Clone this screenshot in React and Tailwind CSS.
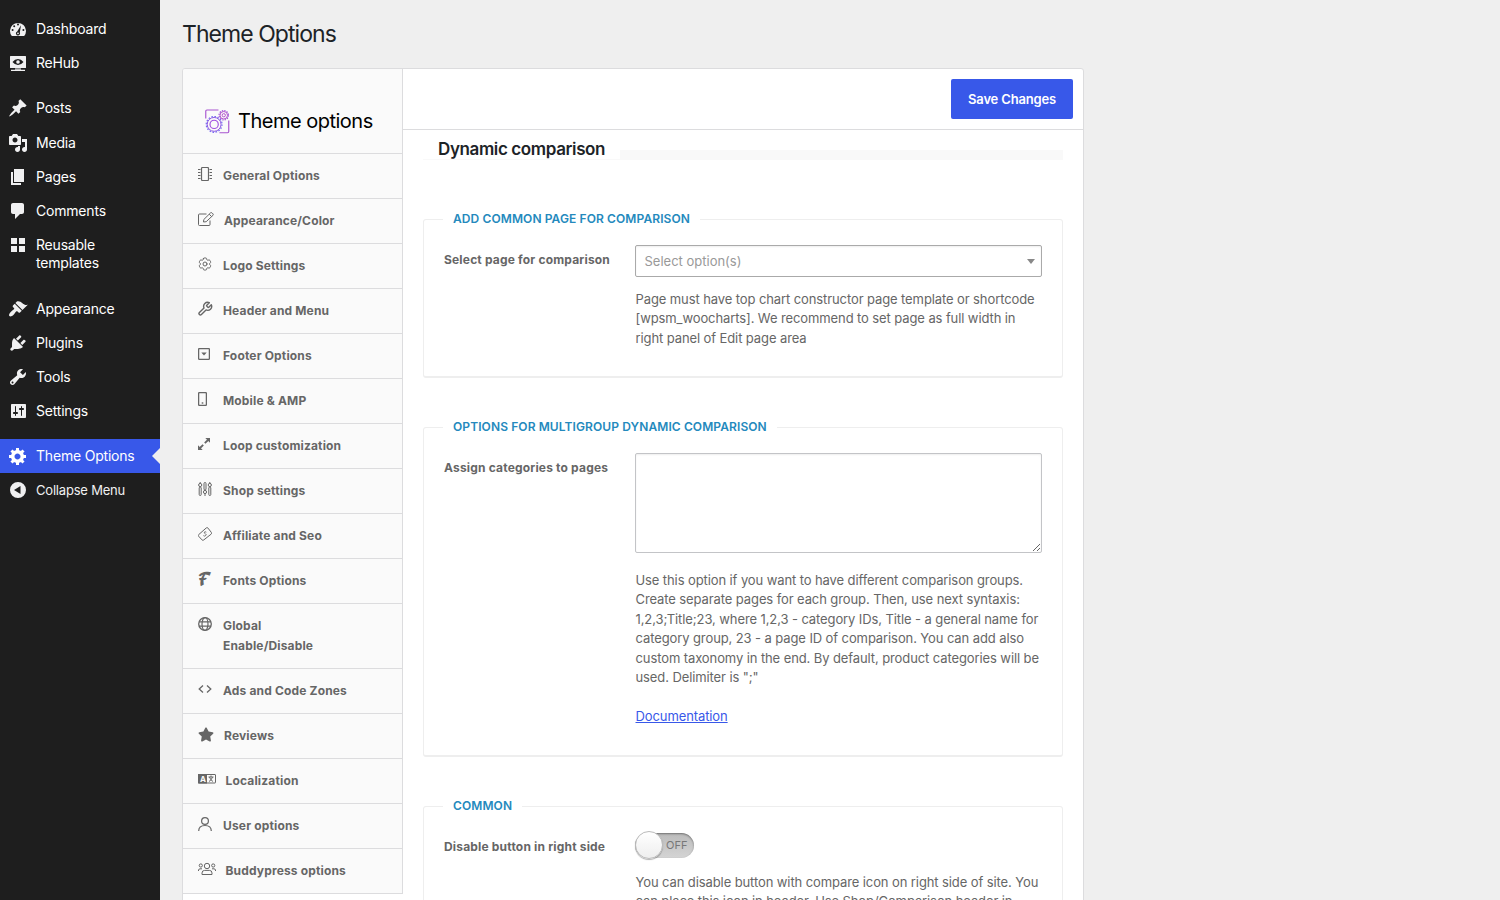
import clsx from "clsx";
import { FaStar } from "react-icons/fa";
import { HiOutlineCog6Tooth } from "react-icons/hi2";
import { LuWrench } from "react-icons/lu";

function Dash({ d }) {
  return (
    <svg viewBox="0 0 20 20" className="size-5 shrink-0" fill="currentColor" fillRule="evenodd">
      <path d={d} />
    </svg>
  );
}

function Line({ className = "size-[14px]", viewBox = "0 0 14 14", children }) {
  return (
    <svg viewBox={viewBox} className={className} fill="none" stroke="currentColor" strokeWidth="1">
      {children}
    </svg>
  );
}

const ICONS = {
  dashboard:
    "M3.8 17h12.4A8 8 0 1 0 3.8 17zM10 4.600a1 1 0 1 1 0 2 1 1 0 0 1 0-2zM6.2 6.3a1 1 0 1 1 0 2 1 1 0 0 1 0-2zM4.6 10a1 1 0 1 1 0 2 1 1 0 0 1 0-2zM15.4 10a1 1 0 1 1 0 2 1 1 0 0 1 0-2zM13 6.3l-1.2 7.2a2 2 0 1 1-2.6-1zM10 13.4a.9.9 0 1 0 0 1.8.9.9 0 0 0 0-1.8z",
  rehub:
    "M2.6 3h14.8q.6 0 .6.6v10.8q0 .6-.6.6H2.6q-.6 0-.6-.6V3.600q0-.6.6-.6zM4.500 9q2.300-3 5.500-3t5.500 3q-2.300 3-5.500 3t-5.500-3zM10 7.200a1.800 1.800 0 1 0 0 3.600 1.800 1.800 0 0 0 0-3.600zM7 15.500h6V17H7zM3 16.700h14V18H3z",
  posts:
    "M10.44 3.02l1.82-1.82 6.36 6.35-1.83 1.82c-1.05-.68-2.48-.57-3.41.36l-.75.75c-.92.93-1.04 2.35-.35 3.41l-1.83 1.82-2.41-2.41-2.8 2.79c-.42.42-3.38 2.71-3.8 2.29s1.86-3.39 2.28-3.81l2.79-2.79L4.1 9.36l1.83-1.82c1.05.69 2.48.57 3.4-.36l.75-.75c.93-.92 1.05-2.35.36-3.41z",
  media:
    "M13 11V4c0-.55-.45-1-1-1h-1.670L9 1H5L3.670 3H2c-.55 0-1 .45-1 1v7c0 .55.45 1 1 1h10c.55 0 1-.45 1-1zM7 4.500c1.380 0 2.500 1.120 2.500 2.500S8.380 9.500 7 9.500 4.500 8.380 4.500 7 5.620 4.500 7 4.500zM14 6h5v10.500c0 1.380-1.120 2.500-2.500 2.500S14 17.880 14 16.500s1.120-2.500 2.500-2.500c.17 0 .34.02.5.05V9h-3V6zm-4 8.050V13h2v3.500c0 1.380-1.120 2.500-2.500 2.500S7 17.880 7 16.500 8.120 14 9.500 14c.17 0 .34.02.5.05z",
  pages: "M6 15V2h10v13H6zm-1 1h8v2H3V5h2v11z",
  comments: "M5 2h9c1.100 0 2 .9 2 2v7c0 1.100-.9 2-2 2h-2l-5 5v-5H5c-1.100 0-2-.9-2-2V4c0-1.100.9-2 2-2z",
  templates: "M3 3h6v6H3zM11 3h6v6h-6zM3 11h6v6H3zM11 11h6v6h-6z",
  appearance:
    "M14.48 11.06L7.41 3.99l1.5-1.5c.5-.56 2.3-.47 3.51.32 1.21.8 1.43 1.28 2.91 2.1 1.18.64 2.45 1.26 4.45.85zm-.71.71L6.7 4.7 4.93 6.47c-.39.39-.39 1.02 0 1.41l1.06 1.06c.39.39.39 1.03 0 1.42-.6.6-1.43 1.11-2.21 1.69-.35.26-.7.53-1.01.84C1.43 14.23.4 16.08 1.4 17.07c.99 1 2.84-.03 4.18-1.36.31-.31.58-.66.85-1.02.57-.78 1.08-1.61 1.69-2.21.39-.39 1.02-.39 1.41 0l1.06 1.06c.39.39 1.02.39 1.41 0z",
  plugins:
    "M13.11 4.36L9.87 7.6 8 5.73l3.24-3.24c.35-.34 1.05-.2 1.56.32.52.51.66 1.21.31 1.55zm-8 1.77l.91-1.12 9.01 9.01-1.19.84c-.71.71-2.63 1.16-3.82 1.16H6.14L4.9 17.26c-.59.59-1.54.59-2.12 0-.59-.58-.59-1.53 0-2.12l1.24-1.24v-3.88c0-1.13.4-3.19 1.09-3.89zm7.26 3.97l3.24-3.24c.34-.35 1.04-.21 1.55.31.52.51.66 1.21.31 1.55l-3.24 3.25z",
  tools:
    "M16.68 9.77c-1.34 1.34-3.3 1.67-4.95.99l-5.41 6.52c-.99.99-2.59.99-3.58 0s-.99-2.59 0-3.57l6.52-5.42c-.68-1.65-.35-3.61.99-4.95 1.28-1.28 3.12-1.62 4.72-1.06l-2.89 2.89 2.82 2.82 2.86-2.87c.53 1.58.18 3.39-1.08 4.65zM3.81 16.21c.4.39 1.04.39 1.43 0 .4-.4.4-1.04 0-1.43-.39-.4-1.03-.4-1.43 0-.39.39-.39 1.03 0 1.43z",
  settings:
    "M18 16V4c0-.55-.45-1-1-1H4c-.55 0-1 .45-1 1v12c0 .55.45 1 1 1h13c.55 0 1-.45 1-1zM8 11h1c.55 0 1 .45 1 1s-.45 1-1 1H8v1.500c0 .28-.22.5-.5.5s-.5-.22-.5-.5V13H6c-.55 0-1-.45-1-1s.45-1 1-1h1V5.500c0-.28.22-.5.5-.5s.5.22.5.5V11zm5-2h-1c-.55 0-1-.45-1-1s.45-1 1-1h1V5.500c0-.28.22-.5.5-.5s.5.22.5.5V7h1c.55 0 1 .45 1 1s-.45 1-1 1h-1v5.500c0 .28-.22.5-.5.5s-.5-.22-.5-.5V9z",
  generic:
    "M18 12h-2.18c-.17.7-.44 1.35-.81 1.93l1.54 1.54-2.1 2.1-1.54-1.54c-.58.36-1.23.63-1.91.79V19H8v-2.18c-.68-.16-1.33-.43-1.91-.79l-1.54 1.54-2.12-2.12 1.54-1.54c-.36-.58-.63-1.23-.79-1.91H1V9.03h2.17c.16-.7.44-1.35.8-1.94L2.43 5.55l2.1-2.1 1.54 1.54c.58-.37 1.24-.64 1.93-.81V2h3v2.18c.68.16 1.33.43 1.91.79l1.54-1.54 2.12 2.12-1.54 1.54c.36.59.64 1.24.8 1.94H18V12zm-8.5 1.5c1.66 0 3-1.34 3-3s-1.34-3-3-3-3 1.34-3 3 1.34 3 3 3z",
  collapse: "M10 2a8 8 0 1 0 0 16 8 8 0 0 0 0-16zM12.500 6v8L6 10z",
};

const MENU = [
  { label: "Dashboard", icon: "dashboard" },
  { label: "ReHub", icon: "rehub" },
  { label: "Posts", icon: "posts", className: "mt-[11px]" },
  { label: "Media", icon: "media", className: "mt-px" },
  { label: "Pages", icon: "pages" },
  { label: "Comments", icon: "comments" },
  { label: "Reusable templates", icon: "templates" },
  { label: "Appearance", icon: "appearance", className: "mt-3" },
  { label: "Plugins", icon: "plugins" },
  { label: "Tools", icon: "tools" },
  { label: "Settings", icon: "settings" },
];

const TABS = [
  {
    label: "General Options",
    icon: (
      <Line>
        <rect x="3.500" y=".5" width="7" height="13" rx="1" strokeWidth="1.200" />
        <path d="M0 2.500h2.500M0 5.500h2.500M0 8.500h2.500M0 11.500h2.500M11.500 2.500h2.500M11.500 5.500h2.500M11.500 8.500h2.500M11.500 11.500h2.500" />
      </Line>
    ),
  },
  {
    label: "Appearance/Color",
    icon: (
      <Line className="h-[14px] w-4" viewBox="0 0 16 14">
        <path d="M8.500 2H1.500q-1 0-1 1v9.500q0 1 1 1h9.500q1 0 1-1V8.500" />
        <path d="M5.500 10l.3-2.500L12.500.9q.8-.6 1.500 0l1 1q.6.7 0 1.400L8.200 9.700zM11.200 2.200l2.400 2.400" />
      </Line>
    ),
    gap: "pl-[10px]",
  },
  { label: "Logo Settings", icon: <HiOutlineCog6Tooth className="-mt-px -ml-px size-4" strokeWidth="1.500" />, gap: "pl-[10px]" },
  { label: "Header and Menu", icon: <LuWrench className="-mt-px -ml-px size-4" strokeWidth="2.100" />, gap: "pl-[10px]" },
  {
    label: "Footer Options",
    icon: (
      <Line className="mt-px size-3" viewBox="0 0 12 12">
        <rect x=".6" y=".6" width="10.800" height="10.800" rx=".8" strokeWidth="1.300" />
        <path d="M3.300 4.500h5.400L6 7.500z" fill="currentColor" stroke="none" />
      </Line>
    ),
    gap: "pl-[13px]",
  },
  {
    label: "Mobile & AMP",
    icon: (
      <Line className="h-[14px] w-[9px]" viewBox="0 0 9 14">
        <rect x=".6" y=".6" width="7.800" height="12.800" rx="1" strokeWidth="1.300" />
        <path d="M3.700 11h1.600" strokeWidth="1.400" />
      </Line>
    ),
    gap: "pl-4",
  },
  {
    label: "Loop customization",
    icon: (
      <Line className="mt-px size-3" viewBox="0 0 12 12">
        <path d="M2 10l3.200-3.200M6.800 5.200L10 2" strokeWidth="1.800" />
        <path d="M7.300 0H12v4.700zM0 7.300V12h4.700z" fill="currentColor" stroke="none" />
      </Line>
    ),
    gap: "pl-[13px]",
  },
  {
    label: "Shop settings",
    icon: (
      <Line>
        <rect x="1.200" y="5" width="2" height="8.500" rx="1" />
        <circle cx="2.200" cy="3" r="1.600" />
        <path d="M2.200 0v1.500M7 11.800V14M11.800 0v1.500" />
        <rect x="6" y=".5" width="2" height="7.500" rx="1" />
        <circle cx="7" cy="10" r="1.600" />
        <rect x="10.800" y="5" width="2" height="8.500" rx="1" />
        <circle cx="11.800" cy="3" r="1.600" />
      </Line>
    ),
  },
  {
    label: "Affiliate and Seo",
    icon: (
      <Line>
        <path d="M.7 7.600L8.300.9q1-.7 1.700.2l3.300 4.300q.7.9-.1 1.700L5.700 13q-1 .7-1.700-.1L.6 9.200q-.6-.9.100-1.600z" />
        <path d="M8.300 5.200q-1.600-1-2 0t1.200 1.700-.1 1.900q-1 .7-2-.2" strokeWidth=".9" />
      </Line>
    ),
  },
  {
    label: "Fonts Options",
    icon: (
      <span className="block h-[14px] w-[14px] origin-left scale-x-[.78] font-['DejaVu_Serif','DejaVu_Math_TeX_Gyre',serif] text-[17px] leading-[14px] font-bold">
        𝓕
      </span>
    ),
  },
  {
    label: "Global Enable/Disable",
    icon: (
      <Line>
        <circle cx="7" cy="7" r="6.300" strokeWidth="1.300" />
        <ellipse cx="7" cy="7" rx="3" ry="6.300" strokeWidth="1.200" />
        <path d="M1 4.800h12M1 9.200h12" strokeWidth="1.200" />
      </Line>
    ),
  },
  {
    label: "Ads and Code Zones",
    icon: (
      <Line>
        <path d="M5 3.500L1.200 7 5 10.500M9 3.500L12.800 7 9 10.500" strokeWidth="1.300" />
      </Line>
    ),
  },
  { label: "Reviews", icon: <FaStar className="h-[15px] w-4" />, gap: "pl-[10px]" },
  {
    label: "Localization",
    icon: (
      <Line className="h-[14px] w-[18px]" viewBox="0 0 18 14">
        <rect x=".5" y="2.500" width="17" height="8.500" rx=".5" />
        <path d="M0 2h9v9.500H0z" fill="currentColor" stroke="none" />
        <path d="M10.500 5h5M13 3.500V5M14.500 5q-.8 3-3.500 4.500M11.500 5q.8 3 3.500 4.500" strokeWidth="1" />
        <text x="1.900" y="9.600" fill="#fafafa" stroke="none" className="font-['Inter',sans-serif] text-[8px] font-bold">
          A
        </text>
      </Line>
    ),
    gap: "pl-[9.500px]",
  },
  {
    label: "User options",
    icon: (
      <Line>
        <circle cx="7" cy="4" r="3.400" strokeWidth="1.200" />
        <path d="M.7 14q0-5.500 6.300-5.500t6.300 5.500" strokeWidth="1.200" />
      </Line>
    ),
  },
  {
    label: "Buddypress options",
    icon: (
      <Line className="h-[14px] w-[18px]" viewBox="0 0 18 14">
        <circle cx="9" cy="4" r="2.700" />
        <circle cx="2.800" cy="3.500" r="1.600" />
        <circle cx="15.200" cy="3.500" r="1.600" />
        <path d="M4 12.500V11q0-2.600 2.600-2.600h4.800q2.600 0 2.600 2.600v1.500zM.4 9Q.3 6.800 2 6.800h2M17.600 9q.1-2.200-1.600-2.200h-2" />
      </Line>
    ),
    gap: "pl-[9.500px]",
  },
];

function AdminMenu() {
  return (
    <nav className="w-40 shrink-0 bg-[#1e1e1e] pt-3 text-sm leading-[18px] tracking-[-0.2px] text-[#f0f0f1]">
      {MENU.map((item) => (
        <div key={item.label} className={clsx("flex gap-2 pr-8 pl-2", item.className)}>
          <div className="pt-[7px]">
            <Dash d={ICONS[item.icon]} />
          </div>
          <span className="py-2 text-white">{item.label}</span>
        </div>
      ))}
      <div className="relative mt-[11px] flex h-[34px] gap-2 bg-[#3858e9] pl-2 text-white">
        <div className="pt-[7px]">
          <Dash d={ICONS.generic} />
        </div>
        <span className="py-2">Theme Options</span>
        <span className="absolute top-[9px] right-0 border-y-8 border-r-8 border-y-transparent border-r-[#efefef]" />
      </div>
      <div className="flex h-[34px] items-center gap-2 pl-2 text-[13px]">
        <Dash d={ICONS.collapse} />
        <span className="pb-px">Collapse Menu</span>
      </div>
    </nav>
  );
}

function Logo() {
  return (
    <svg viewBox="0 0 26 26" className="size-[25px]" fill="none" stroke="#a855d0" strokeWidth="1">
      <path d="M.8 10V2.200Q.8 1 2 1h12M24.700 12v11.500q0 1.200-1.200 1.200H15" strokeWidth="1.200" />
      <circle cx="9.500" cy="16" r="7.200" stroke="#8a4fe0" />
      <circle cx="9.500" cy="16" r="8.200" stroke="#7a6cf0" strokeDasharray="1.700 1.520" strokeWidth="1.300" />
      <circle cx="9.500" cy="16" r="4.300" stroke="#a04fe0" strokeWidth="1.200" />
      <circle cx="19.500" cy="6.500" r="3.900" stroke="#b04fc8" />
      <circle cx="19.500" cy="6.500" r="4.900" stroke="#a050d8" strokeDasharray="1.400 1.160" strokeWidth="1.200" />
      <circle cx="19.500" cy="6.500" r="1.700" stroke="#b04fc8" />
    </svg>
  );
}

function Panel({ title, className, children }) {
  return (
    <fieldset className={clsx("rounded-[3px] border border-b-2 border-[#eee] pl-5", className)}>
      <legend className="-ml-px px-[10px] text-xs leading-[18px] font-semibold tracking-[0.1px] text-[#2489bd] uppercase">
        {title}
      </legend>
      {children}
    </fieldset>
  );
}

function Field({ label, children }) {
  return (
    <div className="flex">
      <label className="w-[191px] shrink-0 pt-[6px] text-xs leading-[18px] font-bold tracking-[0.18px] text-[#666]">{label}</label>
      <div className="w-[407px] text-[13px] leading-[19.500px] tracking-[-0.1px] whitespace-nowrap text-[#666]">{children}</div>
    </div>
  );
}

export default function App() {
  return (
    <div className="flex h-[900px] w-[1500px] overflow-hidden bg-[#efefef] font-['Inter',sans-serif] antialiased">
      <AdminMenu />
      <main className="pl-[22px]">
        <h1 className="pt-[19px] text-[23px] leading-[30px] tracking-[-0.95px] text-[#1d2327]">Theme Options</h1>
        <div className="mt-[19px] flex h-[1000px] w-[902px] rounded-[3px] border border-[#dcdcde] bg-white">
          <aside className="w-[220px] shrink-0">
            <div className="flex h-[85px] items-center gap-2 rounded-tl-[2px] border-r border-b border-[#dcdcde] bg-[#fafafa] pt-5 pl-[22px] text-xl tracking-[-0.5px] text-black">
              <Logo />
              Theme options
            </div>
            {TABS.map((tab) => (
              <div
                key={tab.label}
                className="flex border-r border-b border-[#dcdcde] bg-[#fafafa] py-3 pl-[15px] text-[#666]"
              >
                <div className="shrink-0 pt-px">{tab.icon}</div>
                <span
                  className={clsx(
                    "w-[130px] text-xs leading-5 font-bold tracking-[0.16px]",
                    tab.gap || "pl-[11px]",
                    tab.label.startsWith("Global") || "whitespace-nowrap"
                  )}
                >
                  {tab.label}
                </span>
              </div>
            ))}
          </aside>
          <section className="w-[680px]">
            <div className="flex h-[61px] justify-end border-b border-[#dcdcde] py-[10px] pr-[10px]">
              <button className="h-10 w-[122px] rounded-[2px] bg-[#3858e9] pt-px text-[13px] font-semibold tracking-[-0.17px] text-white">
                Save Changes
              </button>
            </div>
            <div className="px-5 pt-[7px]">
              <div className="flex h-[23px] items-end">
                <h2 className="h-[23px] w-[197px] border-b border-[#f9f9f9] pl-[15px] text-[17px] leading-6 font-semibold tracking-[-0.38px] whitespace-nowrap text-[#1d2327]">
                  Dynamic comparison
                </h2>
                <div className="h-[10px] grow bg-[#f9f9f9]" />
              </div>
              <Panel title="Add common page for comparison" className="mt-[50px] h-[168px]">
                <div className="pt-[17px]">
                  <Field label="Select page for comparison">
                    <div className="flex h-8 items-center justify-between rounded-[2px] border border-[#aaa] pt-px pr-[6px] pl-[8.500px] tracking-normal text-[#999] shadow-[inset_0_1px_2px_rgba(0,0,0,0.07)]">
                      Select option(s)
                      <span className="mb-px border-x-4 border-t-[5px] border-x-transparent border-t-[#888]" />
                    </div>
                    <p className="pt-[12.700px] pl-[0.500px]">
                      Page must have top chart constructor page template or shortcode
                      <br />
                      [wpsm_woocharts]. We recommend to set page as full width in
                      <br />
                      right panel of Edit page area
                    </p>
                  </Field>
                </div>
              </Panel>
              <Panel title="Options for multigroup dynamic comparison" className="mt-10 h-[339px]">
                <div className="pt-[17px]">
                  <Field label="Assign categories to pages">
                    <textarea className="block h-[100px] w-full rounded-[2px] border border-[#c3c4c7] shadow-[inset_0_1px_2px_rgba(0,0,0,0.07)]" />
                    <p className="pt-[17.700px] pl-[0.500px]">
                      Use this option if you want to have different comparison groups.
                      <br />
                      Create separate pages for each group. Then, use next syntaxis:
                      <br />
                      1,2,3;Title;23, where 1,2,3 - category IDs, Title - a general name for
                      <br />
                      category group, 23 - a page ID of comparison. You can add also
                      <br />
                      custom taxonomy in the end. By default, product categories will be
                      <br />
                      used. Delimiter is ";"
                      <br />
                      <br />
                      <a href="#" className="text-[#3858e9] underline">
                        Documentation
                      </a>
                    </p>
                  </Field>
                </div>
              </Panel>
              <Panel title="Common" className="mt-10 h-[200px]">
                <div className="pt-[17px]">
                  <Field label="Disable button in right side">
                    <div className="flex h-7 w-[59px] items-center pb-[2px]">
                      <div className="flex h-[25px] w-[59px] items-center rounded-full bg-gradient-to-b from-[#bbb] to-[#d4d4d4] shadow-[inset_0_1px_2px_rgba(0,0,0,0.4)]">
                        <span className="size-7 shrink-0 rounded-full border border-[#bbb] bg-gradient-to-b from-white to-[#eee] shadow-[0_1px_1px_rgba(0,0,0,0.3)]" />
                        <span className="pt-px pl-[3px] text-[11px] tracking-normal text-[#777]">OFF</span>
                      </div>
                    </div>
                    <p className="pt-[12.700px] pl-[0.500px]">
                      You can disable button with compare icon on right side of site. You
                      <br />
                      can place this icon in header. Use Shop/Comparison header in
                    </p>
                  </Field>
                </div>
              </Panel>
            </div>
          </section>
        </div>
      </main>
    </div>
  );
}
